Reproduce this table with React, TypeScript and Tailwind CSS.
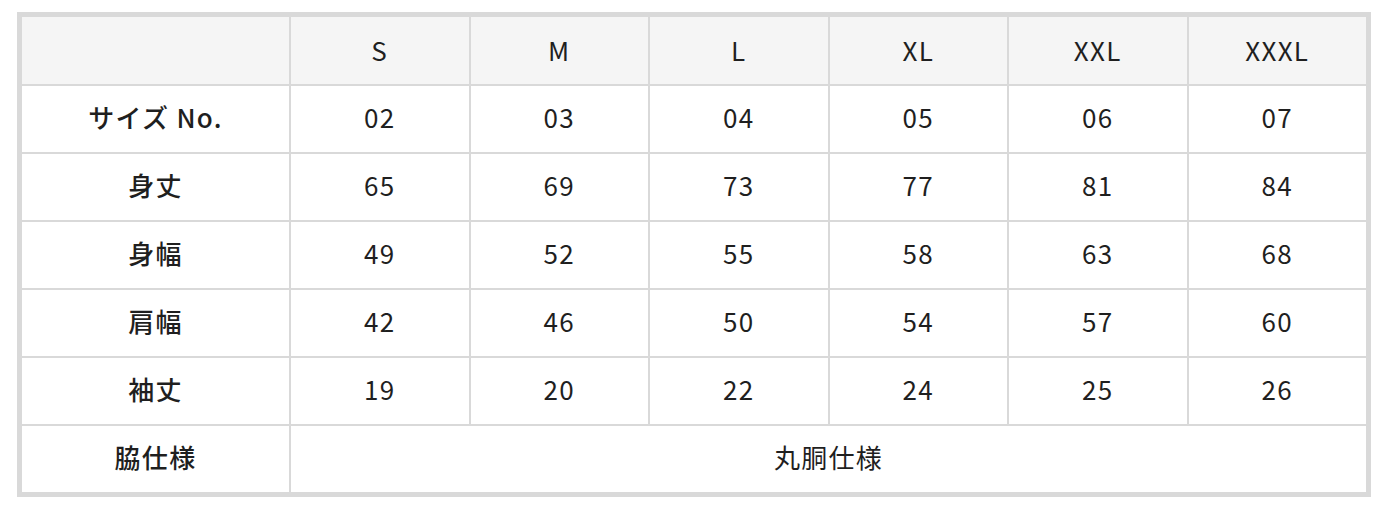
import React from 'react'

const sizes = ['S', 'M', 'L', 'XL', 'XXL', 'XXXL']

const rows: { label: string; values: string[] }[] = [
  { label: 'サイズ No.', values: ['02', '03', '04', '05', '06', '07'] },
  { label: '身丈', values: ['65', '69', '73', '77', '81', '84'] },
  { label: '身幅', values: ['49', '52', '55', '58', '63', '68'] },
  { label: '肩幅', values: ['42', '46', '50', '54', '57', '60'] },
  { label: '袖丈', values: ['19', '20', '22', '24', '25', '26'] },
]

const cell = 'flex items-center justify-center bg-white pb-[5px]'

const App: React.FC = () => {
  return (
    <div
      className="w-[1382px] h-[514px] bg-white pt-[12px] pl-[17px] text-[#1f1f1f] text-[26px] tracking-[0.05em]"
      style={{ fontFamily: '"Noto Sans CJK JP", "Noto Sans", sans-serif' }}>
      <div className="w-[1354px] border-[5px] border-[#d9d9d9] bg-[#d9d9d9]">
        <div className="grid grid-cols-[267px_repeat(6,1fr)] gap-[2px]">
          <div className="h-[67px] bg-[#f5f5f5]" />
          {sizes.map((s) => (
            <div key={s} className="h-[67px] flex items-center justify-center bg-[#f5f5f5] pb-[3px]">
              {s}
            </div>
          ))}
          {rows.map((r) => (
            <React.Fragment key={r.label}>
              <div className={`${cell} h-[66px] font-medium`}>{r.label}</div>
              {r.values.map((v, i) => (
                <div key={i} className={`${cell} h-[66px]`}>
                  {v}
                </div>
              ))}
            </React.Fragment>
          ))}
          <div className={`${cell} h-[66px] font-medium`}>脇仕様</div>
          <div className={`${cell} h-[66px] col-span-6`}>丸胴仕様</div>
        </div>
      </div>
    </div>
  )
}

export default App
